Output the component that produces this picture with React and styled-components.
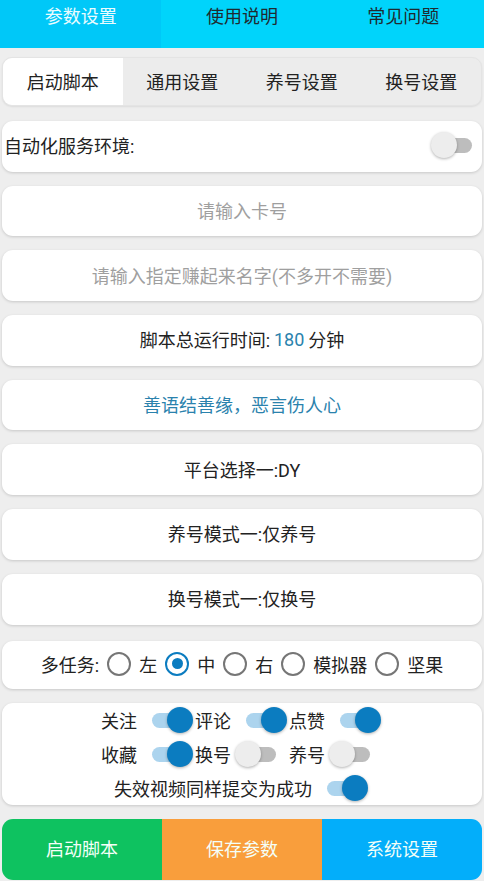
import React, { useState } from "react";
import styled, { createGlobalStyle } from "styled-components";

const Global = createGlobalStyle`
  html, body { margin: 0; padding: 0; background: #eeeeee; }
  body { font-family: Roboto, "Noto Sans CJK SC", "Noto Sans", sans-serif; color: #222; }
  * { box-sizing: border-box; }
`;

const Page = styled.div`
  width: 484px;
  height: 881px;
  overflow: hidden;
  background: #eeeeee;
`;

const TopBar = styled.div`
  display: flex;
  height: 48px;
  background: #00d4fb;
`;

const TopTab = styled.div`
  flex: 1;
  display: flex;
  justify-content: center;
  padding-top: 5px;
  font-size: 18px;
  line-height: 24px;
  color: ${(p) => (p.$active ? "#eafcff" : "#1f2a30")};
  background: ${(p) => (p.$active ? "#00c8f8" : "transparent")};
`;

const Body = styled.div`
  padding: 9px 2px 0;
  display: flex;
  flex-direction: column;
`;

const SubTabs = styled.div`
  display: grid;
  grid-template-columns: repeat(4, 1fr);
  height: 49px;
  border-radius: 10px;
  overflow: hidden;
  background: #ececec;
  border: 1px solid #e4e4e4;
  box-shadow: 0 1px 2px rgba(0, 0, 0, 0.08);
`;

const SubTab = styled.div`
  display: flex;
  align-items: center;
  justify-content: center;
  padding-bottom: 2px;
  font-size: 18px;
  color: #222;
  background: ${(p) => (p.$active ? "#ffffff" : "transparent")};
`;

const Stack = styled.div`
  display: flex;
  flex-direction: column;
  gap: 14px;
  margin-top: 15px;
`;

const Card = styled.div`
  display: flex;
  align-items: center;
  justify-content: ${(p) => (p.$left ? "space-between" : "center")};
  height: ${(p) => p.$h || 50.7}px;
  margin-top: ${(p) => p.$mt || 0}px;
  padding: ${(p) => (p.$left ? "0 0 2px 2px" : "0 0 2px")};
  background: #fff;
  border-radius: 11px;
  box-shadow: 0 1px 3px rgba(0, 0, 0, 0.16);
  font-size: 18px;
  color: ${(p) => p.$color || "#222"};
`;

const Blue = styled.span`
  color: #2a82ad;
  margin: 0 4px;
`;

const SwitchBox = styled.div`
  position: relative;
  width: 58px;
  height: 34px;
  flex: none;
  margin-right: ${(p) => p.$mr || 0}px;
`;

const Track = styled.div`
  position: absolute;
  top: 10px;
  left: ${(p) => (p.$on ? 15 : 9)}px;
  width: 36px;
  height: 15px;
  border-radius: 8px;
  background: ${(p) => (p.$on ? "#acd4ee" : "#bdbdbd")};
`;

const Thumb = styled.div`
  position: absolute;
  top: 4px;
  left: ${(p) => (p.$on ? 30 : 4)}px;
  width: 26px;
  height: 26px;
  border-radius: 50%;
  background: ${(p) => (p.$on ? "#0b7cc0" : "#ededed")};
  box-shadow: 0 1px 3px rgba(0, 0, 0, 0.3);
`;

function Switch({ on, mr }) {
  return (
    <SwitchBox $mr={mr}>
      <Track $on={on} />
      <Thumb $on={on} />
    </SwitchBox>
  );
}

const RadioRow = styled.div`
  display: flex;
  align-items: center;
  font-size: 18px;
  color: #222;
`;

const RadioItem = styled.div`
  display: flex;
  align-items: center;
  gap: 8px;
  margin-left: 8px;
`;

const Circle = styled.div`
  width: 24px;
  height: 24px;
  border-radius: 50%;
  border: ${(p) => (p.$on ? "2.5px solid #0b7cc0" : "2px solid #767676")};
  display: flex;
  align-items: center;
  justify-content: center;
  &::after {
    content: "";
    display: ${(p) => (p.$on ? "block" : "none")};
    width: 11px;
    height: 11px;
    border-radius: 50%;
    background: #0b7cc0;
  }
`;

const SwitchCard = styled.div`
  display: flex;
  flex-direction: column;
  height: 102px;
  background: #fff;
  border-radius: 11px;
  box-shadow: 0 1px 3px rgba(0, 0, 0, 0.16);
`;

const SwitchRow = styled.div`
  display: flex;
  justify-content: center;
  align-items: center;
  height: 34px;
`;

const SwitchItem = styled.div`
  display: flex;
  align-items: center;
  font-size: 18px;
  color: #222;
`;

const Buttons = styled.div`
  display: grid;
  grid-template-columns: repeat(3, 1fr);
  height: 61px;
  margin-top: 14px;
  border-radius: 11px;
  overflow: hidden;
`;

const ActionButton = styled.div`
  display: flex;
  align-items: center;
  justify-content: center;
  padding-bottom: 2px;
  font-size: 18px;
  color: #f4fff8;
  background: ${(p) => p.$bg};
`;

export default function App() {
  const [radio] = useState("中");
  const radios = ["左", "中", "右", "模拟器", "坚果"];
  return (
    <Page>
      <Global />
      <TopBar>
        <TopTab $active>参数设置</TopTab>
        <TopTab>使用说明</TopTab>
        <TopTab>常见问题</TopTab>
      </TopBar>
      <Body>
        <SubTabs>
          <SubTab $active>启动脚本</SubTab>
          <SubTab>通用设置</SubTab>
          <SubTab>养号设置</SubTab>
          <SubTab>换号设置</SubTab>
        </SubTabs>
        <Stack>
          <Card $left>
            <span>自动化服务环境:</span>
            <Switch on={false} mr={-3} />
          </Card>
          <Card $color="#9f9f9f">请输入卡号</Card>
          <Card $color="#9f9f9f">请输入指定赚起来名字(不多开不需要)</Card>
          <Card>
            脚本总运行时间:<Blue>180</Blue>分钟
          </Card>
          <Card $color="#2a82ad">善语结善缘，恶言伤人心</Card>
          <Card>平台选择一:DY</Card>
          <Card>养号模式一:仅养号</Card>
          <Card>换号模式一:仅换号</Card>
          <Card $h={48} $mt={2}>
            <RadioRow>
              <span>多任务:</span>
              {radios.map((r) => (
                <RadioItem key={r}>
                  <Circle $on={r === radio} />
                  <span>{r}</span>
                </RadioItem>
              ))}
            </RadioRow>
          </Card>
          <SwitchCard>
            <SwitchRow>
              <SwitchItem>关注<Switch on /></SwitchItem>
              <SwitchItem>评论<Switch on /></SwitchItem>
              <SwitchItem>点赞<Switch on /></SwitchItem>
            </SwitchRow>
            <SwitchRow>
              <SwitchItem>收藏<Switch on /></SwitchItem>
              <SwitchItem>换号<Switch on={false} /></SwitchItem>
              <SwitchItem>养号<Switch on={false} /></SwitchItem>
            </SwitchRow>
            <SwitchRow>
              <SwitchItem>失效视频同样提交为成功<Switch on /></SwitchItem>
            </SwitchRow>
          </SwitchCard>
        </Stack>
        <Buttons>
          <ActionButton $bg="#0ec260">启动脚本</ActionButton>
          <ActionButton $bg="#f99e3c">保存参数</ActionButton>
          <ActionButton $bg="#03aefa">系统设置</ActionButton>
        </Buttons>
      </Body>
    </Page>
  );
}
